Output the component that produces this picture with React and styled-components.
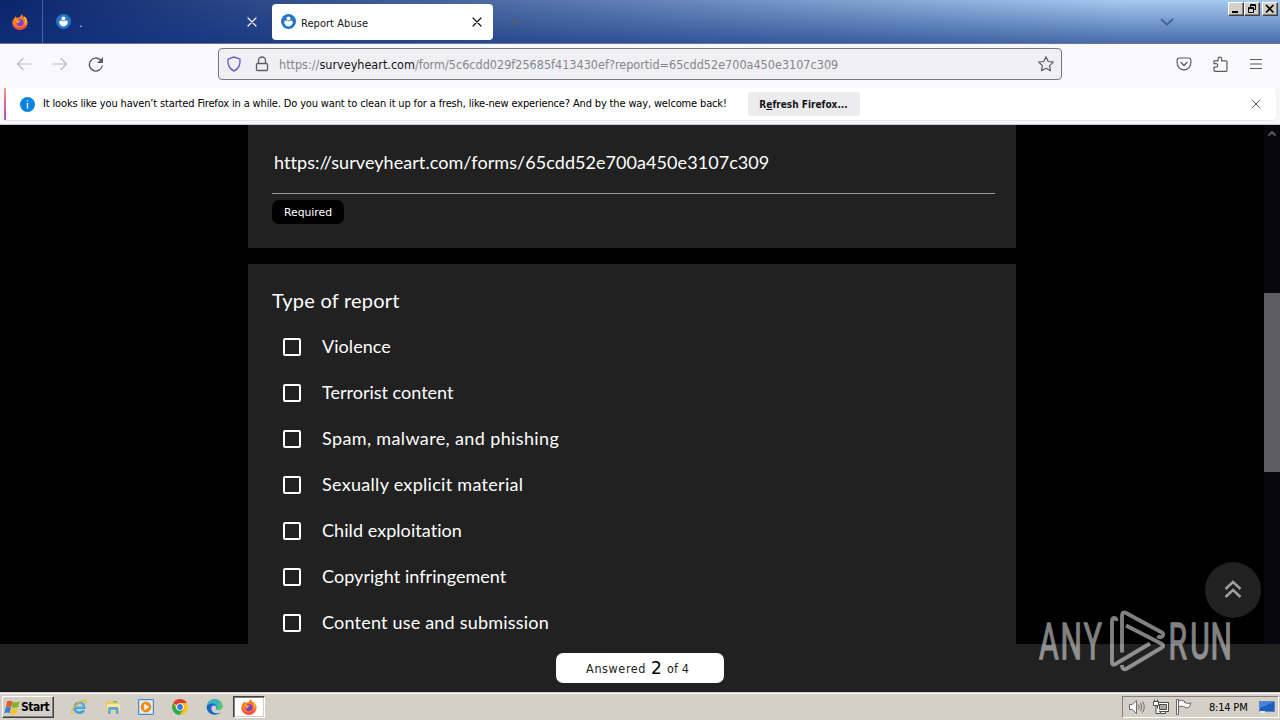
import React from "react";
import styled, { createGlobalStyle, css } from "styled-components";

const GlobalStyle = createGlobalStyle`
  * {
    box-sizing: border-box;
  }

  body {
    margin: 0;
    background: #000;
    overflow: hidden;
  }

  svg {
    display: block;
    flex: none;
  }
`;

const uiFont = `"DejaVu Sans Condensed", "DejaVu Sans", "Noto Sans", sans-serif`;
const pageFont = `Lato, "Open Sans", sans-serif`;

// Shell
const Desktop = styled.div`
  position: relative;
  width: 1280px;
  height: 720px;
  display: flex;
  flex-direction: column;
  overflow: hidden;
  font-family: ${uiFont};
  font-size: 11px;
  color: #000;
`;

const Text = styled.span`
  white-space: pre;
  letter-spacing: ${({ $track }) => $track || 0}px;
`;

// Tab strip
const TabStrip = styled.header`
  height: 44px;
  flex: none;
  display: flex;
  align-items: center;
  border-bottom: 1px solid #6b7798;
  background: linear-gradient(to bottom, rgba(10, 36, 106, 0) 0%, rgba(16, 50, 130, 0.62) 100%),
    linear-gradient(to right, #0a246a 0%, #a6caf0 88%, #a6caf0 100%);
`;

const PinnedTab = styled.div`
  width: 43px;
  height: 43px;
  padding-left: 12px;
  display: flex;
  align-items: center;
  border-right: 1px solid #4c62a0;
`;

const Tab = styled.div`
  width: ${({ $active }) => ($active ? 221 : 225)}px;
  height: 36px;
  margin-right: ${({ $active }) => ($active ? 0 : 4)}px;
  padding: 0 ${({ $active }) => ($active ? 11 : 8)}px 0 ${({ $active }) => ($active ? 9 : 13)}px;
  display: flex;
  align-items: center;
  gap: 6px;
  border-radius: 4px;
  color: ${({ $active }) => ($active ? "#15141a" : "#fff")};
  ${({ $active }) =>
    $active &&
    css`
      background: #fff;
    `}
`;

const TabTitle = styled(Text)`
  flex: 1;
  padding-top: 3px;
`;

const NewTab = styled.div`
  margin-left: 16px;
  color: #5a5f5a;
`;

const TabListButton = styled.div`
  margin-left: auto;
  margin-right: 53px;
  color: #44628f;
`;

const WindowButtons = styled.div`
  display: flex;
  align-self: flex-start;
  padding: 2px 2px 0 0;
`;

const WindowButton = styled.div`
  width: 16px;
  height: 14px;
  margin-left: ${({ $gap }) => ($gap ? 2 : 0)}px;
  background: #d4d0c8;
  border: 1px solid;
  border-color: #fff #404040 #404040 #fff;
  box-shadow: inset -1px -1px 0 #808080;
`;

// Navigation bar
const NavBar = styled.nav`
  height: 44px;
  flex: none;
  display: flex;
  align-items: center;
  padding: 0 16px 4px;
  background: #f9f9fb;
  color: #5b5b66;
`;

const NavButtons = styled.div`
  width: 202px;
  display: flex;
  gap: 20px;
`;

const AddressBar = styled.div`
  width: 844px;
  height: 32px;
  display: flex;
  align-items: center;
  padding: 0 7px;
  background: #f0f0f4;
  border: 1px solid #77777f;
  border-radius: 4px;
`;

const Url = styled(Text)`
  flex: 1;
  margin-left: 9px;
  font-size: 12.5px;
  color: #85858c;

  b {
    font-weight: 400;
    color: #15141a;
  }
`;

const NavTools = styled.div`
  margin-left: auto;
  display: flex;
  gap: 20px;
`;

// Notification bar
const NoticeWrap = styled.div`
  height: 37px;
  flex: none;
  padding: 0 4px 4px;
  background: #f6f6f8;
  border-bottom: 1px solid #c9c9cd;
`;

const Notice = styled.div`
  height: 32px;
  display: flex;
  align-items: center;
  padding: 0 12px 0 14px;
  background: #fff;
  border-left: 2px solid;
  border-image: linear-gradient(#f2a67c, #e35fa0 50%, #9059d0) 1;
  border-radius: 0 4px 4px 0;
  box-shadow: 0 1px 1px #e4e4e8;
`;

const NoticeText = styled(Text)`
  margin-left: 8px;
  width: 705px;
  padding-bottom: 1px;
`;

const NoticeButton = styled.button`
  width: 112px;
  height: 24px;
  padding: 0 1px 0 0;
  border: 0;
  border-radius: 4px;
  background: #ececef;
  font: bold 10px ${uiFont};
  color: #15141a;
`;

const NoticeClose = styled.div`
  margin-left: auto;
  color: #5b5b66;
`;

// Page
const Viewport = styled.main`
  height: 567px;
  flex: none;
  display: grid;
  grid-template-columns: 1264px 16px;
  grid-template-rows: 519px 48px;
  background: #000;
`;

const Form = styled.div`
  padding-left: 248px;
  overflow: hidden;
  font-family: ${pageFont};
  color: #fff;
`;

const Card = styled.section`
  width: 768px;
  height: ${({ $height }) => $height}px;
  margin-bottom: 16px;
  padding: 0 21px 0 24px;
  background: #212121;
`;

const Answer = styled.div`
  height: 69px;
  width: 723px;
  padding: 26px 0 0 2px;
  border-bottom: 1px solid #9a9a9a;
  font-size: 18px;
  line-height: 22px;
`;

const RequiredBadge = styled.div`
  width: 72px;
  height: 24px;
  margin-top: 6px;
  display: flex;
  align-items: center;
  justify-content: center;
  background: #000;
  border-radius: 7px;
  font-family: "DejaVu Sans", sans-serif;
  font-size: 10.8px;
`;

const Question = styled.h2`
  margin: 0;
  padding-top: 24px;
  height: 60px;
  font-size: 20px;
  font-weight: 400;
  line-height: 25px;
`;

const Option = styled.label`
  height: 46px;
  padding-left: 11px;
  display: flex;
  align-items: center;
  gap: 21px;
  font-size: 18px;
`;

const OptionLabel = styled(Text)`
  padding-bottom: 2px;
`;

const Box = styled.i`
  width: 18px;
  height: 18px;
  border: 2px solid #fff;
  border-radius: 2px;
`;

const Scrollbar = styled.div`
  background: #08070c;
  padding-top: 4px;
  display: flex;
  flex-direction: column;
  align-items: center;
  color: #5a5a60;
`;

const Thumb = styled.div`
  width: 16px;
  height: 179px;
  margin-top: 154px;
  background: #5d5d5f;
`;

const Footer = styled.footer`
  grid-column: 1 / 3;
  display: flex;
  justify-content: center;
  padding-top: 9px;
  background: #212121;
`;

const Progress = styled.div`
  width: 168px;
  height: 30px;
  padding-right: 5px;
  display: flex;
  align-items: center;
  justify-content: center;
  gap: 5px;
  background: #fff;
  border-radius: 7px;
  font-size: 12.5px;
  color: #212121;

  b {
    font: 17px "DejaVu Sans", sans-serif;
    color: #000;
  }
`;

const ScrollTop = styled.div`
  position: absolute;
  left: 1205px;
  top: 562px;
  width: 56px;
  height: 56px;
  display: flex;
  align-items: center;
  justify-content: center;
  border-radius: 50%;
  background: #212121;
`;

const Watermark = styled.div`
  position: absolute;
  left: 1036px;
  top: 608px;
  opacity: 0.5;
`;

// Taskbar
const Taskbar = styled.div`
  height: 28px;
  flex: none;
  display: flex;
  align-items: center;
  padding: 3px 1px 1px 2px;
  background: #d4d0c8;
  box-shadow: inset 0 1px 0 #d4d0c8, inset 0 2px 0 #fff;
`;

const StartButton = styled.div`
  width: 52px;
  height: 22px;
  padding-left: 1px;
  display: flex;
  align-items: center;
  border: 1px solid;
  border-color: #fff #404040 #404040 #fff;
  box-shadow: inset -1px -1px 0 #808080;
  font-size: 12px;
  font-weight: bold;
`;

const QuickLaunch = styled.div`
  display: flex;
  align-items: center;
  gap: 17.7px;
  margin-left: 17px;
`;

const TaskButton = styled.div`
  width: 32px;
  height: 22px;
  margin-left: 10px;
  display: flex;
  align-items: center;
  justify-content: center;
  background: #fff;
  border: 1px solid;
  border-color: #404040 #fff #fff #404040;
  box-shadow: inset 1px 1px 0 #808080, inset -1px -1px 0 #d4d0c8;
`;

const Tray = styled.div`
  width: 157px;
  height: 22px;
  margin-left: auto;
  padding: 0 2px 0 5px;
  display: flex;
  align-items: center;
  gap: 7px;
  border: 1px solid;
  border-color: #808080 #fff #fff #808080;
`;

const Clock = styled(Text)`
  margin: 0 5px 0 10px;
`;

// Icons
const Line = ({ d, size = 16, w = 1.2, ...rest }) => (
  <svg
    width={size}
    height={size}
    viewBox={`0 0 ${size} ${size}`}
    fill="none"
    stroke="currentColor"
    strokeWidth={w}
    strokeLinecap="round"
    strokeLinejoin="round"
    {...rest}
  >
    <path d={d} />
  </svg>
);

const FirefoxIcon = () => (
  <svg width="16" height="16" viewBox="0 0 16 16">
    <path
      fill="#ff7a22"
      d="M3.4 2.2 4.8 3.9C6 3.3 6.8 3.3 7.8 3.2 8.2 1.9 9 .8 10.2.3c.1 1.5.9 2.2 1.9 3.1.5-.1.4-.6.4-.9 1.8 1.6 3.2 3.9 3.1 6.3-.2 4-3.5 7-7.5 7S.5 12.9.4 8.9C.3 7 1.1 5.4 2 4.6c.4-.7.8-1.6 1.4-2.4z"
    />
    <path fill="#ff4050" d="M.5 8.5c1.2 4 4.6 5.7 7.9 5.1 2.4-.4 4.5-2 6.2-3.4-.8 3.3-3.4 5.4-6.6 5.5C4 15.8.6 12.6.5 8.5z" />
    <path fill="#ffd43a" d="M10.2.3c.1 1.8 1.4 2.6 2.3 4 1.3 2.1 1.2 5-.2 7 2.3-2.2 3-5.3 1-8.3l-.8-.5-.4.9c-1-.9-1.8-1.6-1.9-3.1z" />
    <circle cx="8" cy="8.6" r="3.6" fill="#7b3fd0" />
    <path fill="#ff9a2a" d="M3.1 5.5c1.5-.9 3 .1 3.8.7l2 .3c-.3 1-1.8 1-2 1.9-.2 1-.9 1-1.6.8-1-.3-1.8-1.8-2.2-3.7z" />
  </svg>
);

const SurveyIcon = () => (
  <svg width="15" height="15" viewBox="0 0 14 14" style={{ margin: "0 -1px 0 0" }}>
    <circle cx="7" cy="7" r="7" fill="#2474c8" />
    <circle cx="7" cy="4.2" r="1.9" fill="#fff" />
    <path fill="#fff" d="M3.6 6.4c1-.7 2.300-.3 3.400.6 1.100-.9 2.400-1.300 3.400-.6 1.300 1.300.3 3.500-1 4.400-.8.6-1.600.9-2.400.9s-1.600-.3-2.400-.9c-1.300-.9-2.300-3.100-1-4.400z" />
  </svg>
);

const InfoIcon = () => (
  <svg width="15" height="15" viewBox="0 0 15 15">
    <circle cx="7.5" cy="7.5" r="7.5" fill="#0a84e0" />
    <path stroke="#fff" strokeWidth="1.3" d="M7.5 3.3v1.3M7.5 6v5.5" />
  </svg>
);

const WindowsFlag = () => (
  <svg width="17" height="17" viewBox="0 0 16 16">
    <path fill="#e8582a" d="M3 2.2c2-1 3.4-.8 5 .1L6.8 7.8C5.2 6.9 3.7 6.8 1.8 7.6z" />
    <path fill="#7bb52c" d="M8.2 2.5c1.8.9 3.8.9 6.6-.5l-1.5 5.6c-2 .9-4 .9-6.1.2z" />
    <path fill="#3a7fd2" d="M1.6 7.9c2-.8 3.4-.7 5 .2L5.3 13.5c-1.6-.9-3.2-1-5.1-.1z" />
    <path fill="#f6c330" d="M7 8.2c1.8.9 3.9.9 6.1 0l-1.3 5.6c-2 1-4 .9-6.2-.1z" />
  </svg>
);

const ExplorerIcon = () => (
  <svg width="16" height="16" viewBox="0 0 16 16" fill="none">
    <path stroke="#3b9fd8" strokeWidth="2.6" d="M3.8 8.7h9.3c.2-3-1.9-4.9-4.6-4.9-2.9 0-4.9 2.2-4.9 5s2 4.9 4.9 4.9c1.9 0 3.3-.7 4.2-2.3" />
    <path stroke="#8fd0f0" strokeWidth=".8" d="M4 8.2h8.5c0-2.5-1.9-4-4-4" />
    <path stroke="#e7b928" strokeWidth="1.3" d="M2.2 14.6C-.6 14.8.6 10 5.6 5.2 10 1.2 15 0 15.2 2c.1.9-.3 1.8-.8 2.6" />
  </svg>
);

const FolderIcon = () => (
  <svg width="16" height="16" viewBox="0 0 16 16">
    <path fill="#eccb66" d="M1 2h5l1 1.5h6.5V13H1z" />
    <path fill="#f8e8a4" d="M2 5h13v7H2z" />
    <path fill="#72b845" d="M8 2h4v1.5H8z" />
    <path fill="#5ea9d8" d="M3 9.5C3 8.5 4 8 5 8h6.500c1 0 2 .5 2 1.500V15h-2.700v-4H5.700v4H3z" />
  </svg>
);

const MediaIcon = () => (
  <svg width="16" height="16" viewBox="0 0 16 16">
    <path fill="#b9d8ef" stroke="#4b8ec6" d="M.5.5h15v15H.5z" />
    <path fill="#e3eff8" d="M2 2h12v12H2z" />
    <circle cx="8" cy="8" r="5.4" fill="#f28a18" />
    <path fill="#fff" d="M6.3 4.8 11.3 8l-5 3.2z" />
  </svg>
);

const ChromeIcon = () => (
  <svg width="16" height="16" viewBox="0 0 16 16">
    <circle cx="8" cy="8" r="7.8" fill="#fbc116" />
    <path fill="#e33b2e" d="M8 8 1.2 4.1A7.8 7.8 0 0 1 14.8 4.1H8z" />
    <path fill="#2da94f" d="M1.2 4.1A7.8 7.8 0 0 0 8 15.8L11.4 10 8 8 4.6 10z" />
    <circle cx="8" cy="8" r="3.8" fill="#fff" />
    <circle cx="8" cy="8" r="2.9" fill="#3b78e7" />
  </svg>
);

const EdgeIcon = () => (
  <svg width="17" height="16" viewBox="0 0 17 16">
    <path fill="#1a66c4" d="M.7 7.5C1.2 3.4 4.3.3 8.5.3c4.5 0 7.9 3.2 7.9 7 0 2.3-1.7 3.7-4 3.7-1.5 0-2.500-.5-2.200-1.300.8-1.400-.2-3.300-2.200-3.300-1.900 0-3 1.700-2.600 3.900.5 2.500 3 4.200 5.900 4 1.300-.1 2.300-.5 3.400-1.100-1.400 1.700-3.700 2.600-6.200 2.500C3.800 15.500.3 12 .7 7.500z" />
    <path fill="#35b5c9" d="M.8 7C1.5 3.2 4.6.3 8.5.3c4.500 0 7.900 3.200 7.900 7 0 2.300-1.700 3.700-4 3.700-1.500 0-2.500-.5-2.200-1.300 1.400-2.600-.7-5.200-4-5.200C3.800 4.500 2 5.500.8 7z" />
    <path fill="#58c963" d="M11 .8c3.200.9 5.400 3.600 5.400 6.500 0 2.300-1.700 3.700-4 3.700-1 0-1.800-.3-2.100-.7 3.900-1.800 3.900-6.500.7-9.500z" />
  </svg>
);

const SpeakerIcon = () => (
  <svg width="18" height="16" viewBox="0 0 18 16" fill="none" stroke="#6a6a6a">
    <path fill="#fff" d="M1.5 5.5h2.7L8.5 1.5v13l-4.3-4H1.5z" />
    <path d="M10.5 5.500q1.500 2.500 0 5M12.500 3.800q2.500 4.200 0 8.400M14.500 2.500q3.500 5.500 0 11" />
  </svg>
);

const NetworkIcon = () => (
  <svg width="16" height="16" viewBox="0 0 16 16" fill="none" stroke="#4d4d4d">
    <path fill="#fff" d="M4.5 3.5h11v9h-11zM7.5 12.5h5v2h-5z" />
    <path fill="#a6a6a6" d="M6.5 5.5h7v5h-7z" />
    <path fill="#fff" d="M.5 2.5h5v4h-5zM1.5.5v2M4.5.5v2M3 6.5v8h4" />
  </svg>
);

const FlagIcon = () => (
  <svg width="16" height="16" viewBox="0 0 16 16" stroke="#666" fill="#fff">
    <path d="M.5.5h2v15h-2zM2.5 2q3-1.5 6 0v1.5q3 1.5 6.5.5-1 3-2.5 4.5-3 1-5-1-2.500-.8-5 .5z" />
  </svg>
);

const DesktopIcon = () => (
  <svg width="16" height="14" viewBox="0 0 16 14">
    <path fill="#1c5fc0" stroke="#6687b3" d="M.5 1.5h15v10H.5z" />
    <path fill="#3f87dc" d="M1 2h14L1 8z" />
    <path fill="#e8edf2" d="M1 11h5v2H1z" />
  </svg>
);

const Logo = () => (
  <svg width="204" height="66" viewBox="0 0 204 66" fill="none" overflow="visible">
    <g
      transform="scale(0.6 1)"
      fill="#fff"
      stroke="#fff"
      strokeWidth="1.3"
      fontFamily="Roboto, sans-serif"
      fontSize="50"
    >
      <text x="5 41 79.5" y="50.6">ANY</text>
      <text x="221 257 291" y="50.6">RUN</text>
    </g>
    <g stroke="#fff" strokeWidth="3.8" strokeLinejoin="round">
      <path d="M80.5 13C80 8.500 76 9 76 13v41q0 4 3.500 2L114 35.500" />
      <path d="M86 44.5V8q0-5 4-3l36 19.500q2 1.500 .5 3.500-2 2.500-5 0" />
      <path d="M90 17.5l36 18.500q2.500 1.700 0 3.500L90 61q-4 1.500-4-4" />
    </g>
  </svg>
);

const options = [
  { label: "Violence", track: 0.05 },
  { label: "Terrorist content", track: 0 },
  { label: "Spam, malware, and phishing", track: 0.37 },
  { label: "Sexually explicit material", track: 0.3 },
  { label: "Child exploitation", track: 0.06 },
  { label: "Copyright infringement", track: 0.05 },
  { label: "Content use and submission", track: 0.2 },
];

const closePath = "M4 4l8 8M12 4l-8 8";

const App = () => (
  <>
    <GlobalStyle />
    <Desktop>
      <TabStrip>
        <PinnedTab>
          <FirefoxIcon />
        </PinnedTab>
        <Tab>
          <SurveyIcon />
          <TabTitle> .</TabTitle>
          <Line d={closePath} />
        </Tab>
        <Tab $active>
          <SurveyIcon />
          <TabTitle $track={0.05}>Report Abuse</TabTitle>
          <Line d={closePath} style={{ marginRight: -3 }} />
        </Tab>
        <NewTab>
          <Line d="M6 2v8M2 6h8" size={12} />
        </NewTab>
        <TabListButton>
          <Line d="M2.5 5.5l5.5 5 5.5-5" w={1.8} />
        </TabListButton>
        <WindowButtons>
          <WindowButton>
            <svg width="14" height="12">
              <path fill="#000" d="M3 8h6v2H3z" />
            </svg>
          </WindowButton>
          <WindowButton>
            <svg width="14" height="12" fill="none" stroke="#000">
              <path d="M5.5 4V1.500h5v5H9M5 2.500h6M3.500 4.500h5v5h-5zM3 5.500h6" />
            </svg>
          </WindowButton>
          <WindowButton $gap>
            <svg width="14" height="12" stroke="#000" strokeWidth="1.7">
              <path d="M3 2l7.500 7.500M10.500 2L3 9.500" />
            </svg>
          </WindowButton>
        </WindowButtons>
      </TabStrip>

      <NavBar>
        <NavButtons>
          <Line d="M15 8H1.5M7 2.5L1.5 8 7 13.5" color="#bcbcc2" />
          <Line d="M1 8h13.5M9 2.5L14.5 8 9 13.5" color="#bcbcc2" />
          <svg width="16" height="16" fill="none" stroke="currentColor" strokeWidth="1.4">
            <path d="M14.3 9.5A6.5 6.5 0 1 1 12.5 4" />
            <path fill="currentColor" stroke="none" d="M15 1v6H9z" />
          </svg>
        </NavButtons>
        <AddressBar>
          <Line d="M8 1l6 2.2c.5 4.800-1 9.300-6 11.800C3 12.500 1.500 8 2 3.200z" color="#6f5fc8" w={1.4} />
          <Line
            d="M4.5 7V4.5a3.500 3.500 0 0 1 7 0V7M3.500 7.500h9a1 1 0 0 1 1 1v5a1 1 0 0 1-1 1h-9a1 1 0 0 1-1-1v-5a1 1 0 0 1 1-1z"
            w={1.3}
            style={{ marginLeft: 12 }}
          />
          <Url $track={0.01}>
            https://<b>surveyheart.com</b>/form/5c6cdd029f25685f413430ef?reportid=65cdd52e700a450e3107c309
          </Url>
          <Line d="M8 .8l2.200 4.700 5.100.6-3.700 3.500.9 5.200L8 12.300l-4.500 2.500.9-5.200L.7 6.100l5.100-.6z" />
        </AddressBar>
        <NavTools>
          <Line d="M3 2h10a1.800 1.800 0 0 1 1.800 1.800V7A6.800 6.800 0 0 1 1.200 7V3.800A1.800 1.800 0 0 1 3 2zM5 6.500l3 3 3-3" />
          <Line d="M2 4.800h4V3a1.800 1.800 0 0 1 3.600 0v1.800H14a1 1 0 0 1 1 1v8.700a.8.8 0 0 1-.8.8H3a1 1 0 0 1-1-1v-3.200h2a1.700 1.700 0 0 0 0-3.400H2z" />
          <Line d="M2.500 3.500h11M2.500 8h11M2.500 12.500h11" />
        </NavTools>
      </NavBar>

      <NoticeWrap>
        <Notice>
          <InfoIcon />
          <NoticeText $track={-0.15}>
            It looks like you haven’t started Firefox in a while. Do you want to clean it up for a fresh, like-new
            experience? And by the way, welcome back!
          </NoticeText>
          <NoticeButton>
            R<u>e</u>fresh Firefox...
          </NoticeButton>
          <NoticeClose>
            <Line d={closePath} w={1} />
          </NoticeClose>
        </Notice>
      </NoticeWrap>

      <Viewport>
        <Form>
          <Card $height={123}>
            <Answer>
              <Text $track={0.06}>https://surveyheart.com/forms/65cdd52e700a450e3107c309</Text>
            </Answer>
            <RequiredBadge>Required</RequiredBadge>
          </Card>
          <Card $height={400}>
            <Question>
              <Text $track={0.22}>Type of report</Text>
            </Question>
            {options.map(({ label, track }) => (
              <Option key={label}>
                <Box />
                <OptionLabel $track={track}>{label}</OptionLabel>
              </Option>
            ))}
          </Card>
        </Form>
        <Scrollbar>
          <Line d="M2 6l3-3 3 3" size={10} w={1.8} />
          <Thumb />
        </Scrollbar>
        <Footer>
          <Progress>
            <Text $track={0.6}>Answered</Text>
            <b>2</b>
            <Text $track={0.1}>of 4</Text>
          </Progress>
        </Footer>
      </Viewport>

      <Taskbar>
        <StartButton>
          <WindowsFlag />
          <Text $track={-0.5}>Start</Text>
        </StartButton>
        <QuickLaunch>
          <ExplorerIcon />
          <FolderIcon />
          <MediaIcon />
          <ChromeIcon />
          <EdgeIcon />
        </QuickLaunch>
        <TaskButton>
          <FirefoxIcon />
        </TaskButton>
        <Tray>
          <SpeakerIcon />
          <NetworkIcon />
          <FlagIcon />
          <Clock $track={-0.2}>8:14 PM</Clock>
          <DesktopIcon />
        </Tray>
      </Taskbar>

      <ScrollTop>
        <Line
          d="M4.500 11l7.500-7 7.500 7M4.500 19l7.500-7 7.500 7"
          size={24}
          w={2.4}
          color="#a0a0a0"
          strokeLinecap="butt"
          strokeLinejoin="miter"
        />
      </ScrollTop>
      <Watermark>
        <Logo />
      </Watermark>
    </Desktop>
  </>
);

export default App;
